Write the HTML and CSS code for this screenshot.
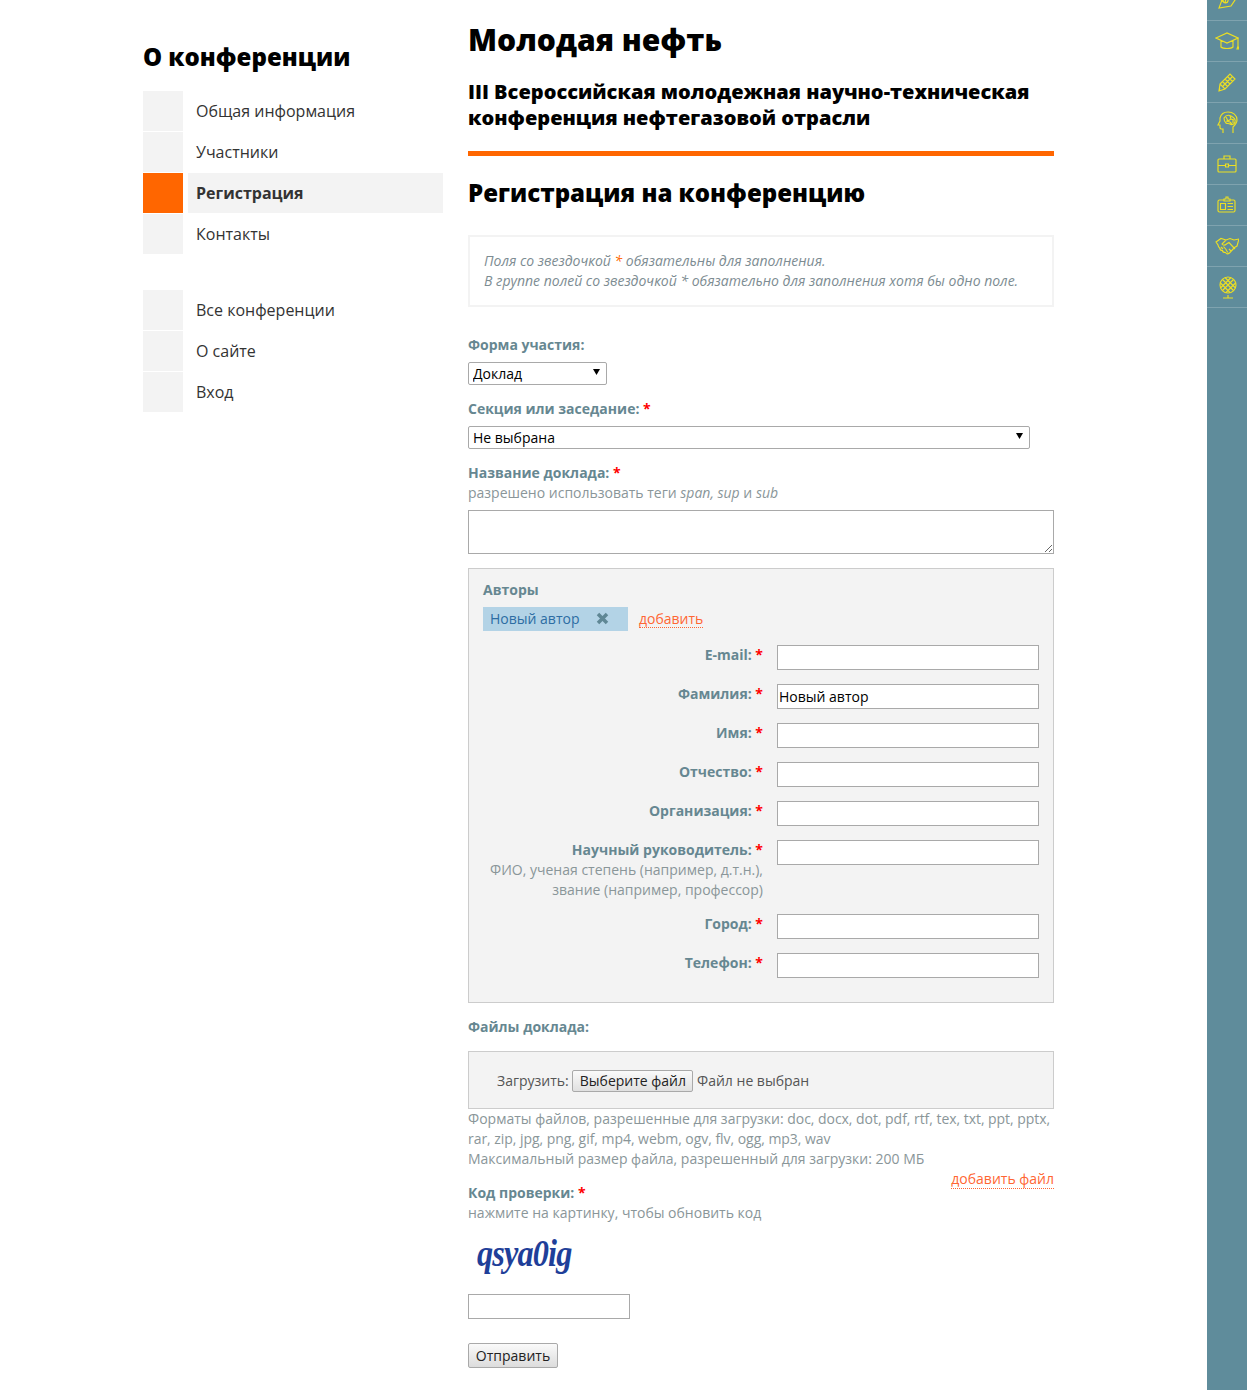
FILE: index.html
```html
<!DOCTYPE html>
<html lang="ru">
<head>
<meta charset="utf-8">
<title>Молодая нефть</title>
<link rel="stylesheet" href="styles.css">
</head>
<body>
<div class="page">
  <aside class="side">
    <h2 class="side-title">О конференции</h2>
    <ul class="menu">
      <li class="menu-item"><span class="sq"></span><a class="menu-link">Общая информация</a></li>
      <li class="menu-item"><span class="sq"></span><a class="menu-link">Участники</a></li>
      <li class="menu-item active"><span class="sq"></span><a class="menu-link">Регистрация</a></li>
      <li class="menu-item"><span class="sq"></span><a class="menu-link">Контакты</a></li>
    </ul>
    <ul class="menu menu-second">
      <li class="menu-item"><span class="sq"></span><a class="menu-link">Все конференции</a></li>
      <li class="menu-item"><span class="sq"></span><a class="menu-link">О сайте</a></li>
      <li class="menu-item"><span class="sq"></span><a class="menu-link">Вход</a></li>
    </ul>
  </aside>
  <main class="main">
    <h1 class="title">Молодая нефть</h1>
    <p class="subtitle">III Всероссийская молодежная научно-техническая конференция нефтегазовой отрасли</p>
    <div class="rule"></div>
    <h2 class="heading">Регистрация на конференцию</h2>
    <div class="notice">Поля со звездочкой <span class="notice-star">*</span> обязательны для заполнения.<br>В группе полей со звездочкой * обязательно для заполнения хотя бы одно поле.</div>
    <form class="form">
      <label class="label lab-form">Форма участия:</label>
      <select class="sel sel-short"><option>Доклад</option></select>
      <label class="label lab-sec">Секция или заседание: <b class="req">*</b></label>
      <select class="sel sel-long"><option>Не выбрана</option></select>
      <label class="label lab-name">Название доклада: <b class="req">*</b></label>
      <div class="hint">разрешено использовать теги <i>span, sup</i> и <i>sub</i></div>
      <textarea class="area"></textarea>

      <section class="authors">
        <div class="label">Авторы</div>
        <div class="tabs"><span class="tab">Новый автор<svg class="tab-x" viewBox="0 0 13 13"><path d="M2 2l9 9M11 2l-9 9"/></svg></span><a class="dotted">добавить</a></div>
        <div class="row"><div class="cap"><b class="label">E-mail:</b> <b class="req">*</b></div><input class="inp"></div>
        <div class="row"><div class="cap"><b class="label">Фамилия:</b> <b class="req">*</b></div><input class="inp" value="Новый автор"></div>
        <div class="row"><div class="cap"><b class="label">Имя:</b> <b class="req">*</b></div><input class="inp"></div>
        <div class="row"><div class="cap"><b class="label">Отчество:</b> <b class="req">*</b></div><input class="inp"></div>
        <div class="row"><div class="cap"><b class="label">Организация:</b> <b class="req">*</b></div><input class="inp"></div>
        <div class="row"><div class="cap"><b class="label">Научный руководитель:</b> <b class="req">*</b><br><span class="hint">ФИО, ученая степень (например, д.т.н.), звание (например, профессор)</span></div><input class="inp"></div>
        <div class="row"><div class="cap"><b class="label">Город:</b> <b class="req">*</b></div><input class="inp"></div>
        <div class="row"><div class="cap"><b class="label">Телефон:</b> <b class="req">*</b></div><input class="inp"></div>
      </section>

      <div class="label lab-files">Файлы доклада:</div>
      <div class="upload">Загрузить: <button class="choose" type="button">Выберите файл</button> <span>Файл не выбран</span></div>
      <div class="hint">Форматы файлов, разрешенные для загрузки: <span class="latin">doc, docx, dot, pdf, rtf, tex, txt, ppt, pptx, rar, zip, jpg, png, gif, mp4, webm, ogv, flv, ogg, mp3, wav</span><br>Максимальный размер файла, разрешенный для загрузки: 200 МБ</div>
      <div class="addfile"><a class="dotted">добавить файл</a></div>
      <label class="label lab-code">Код проверки: <b class="req">*</b></label>
      <div class="hint">нажмите на картинку, чтобы обновить код</div>
      <div class="captcha"><span class="captcha-text">qsya0ig</span></div>
      <input class="inp inp-code">
      <button class="submit" type="button">Отправить</button>
    </form>
  </main>
  <nav class="rail">
    <a class="rail-item"><svg class="ic" viewBox="0 0 24 24"><path d="M6 4 7 12 4 20 16 18 20 12 21 0M6 12l4 3M10 15l3-14M13 13a2.500 2.500 0 1 1-3-3 2.500 2.500 0 0 1 3 3z"/></svg></a>
    <a class="rail-item"><svg class="ic" viewBox="0 0 24 24"><path d="M1 9 12 4l11 5-11 5zM6 11.500V18c2 2 10 2 12 0v-6.500M23 9v8M22 20l1-3 1 3z"/></svg></a>
    <a class="rail-item"><svg class="ic" viewBox="0 0 24 24"><path d="M5 14 15 4l5 5-10 10-6 2zM5 14l5 5M4 21l1-3M7.500 11.500l5 5M10 9l5 5M12.500 6.500l5 5M8 16 17 7"/></svg></a>
    <a class="rail-item"><svg class="ic" viewBox="0 0 24 24"><path d="M8 22v-4H6l-1-1v-3H3l2-4V7c1-4 4-6 8-6 5 0 9 3 9 8 0 3-2 5-4 7v6M9 7c2-3 5-3 7-2s5 3 4 6-4 3-5 2-3 0-4-1-2-3-2-5zM11 6l2 4 3-2M15 5l1 3 3 1M11 10l4 1 2 2M18 9v3"/></svg></a>
    <a class="rail-item"><svg class="ic" viewBox="0 0 24 24"><path d="M4 7h16a1 1 0 0 1 1 1v11a1 1 0 0 1-1 1H4a1 1 0 0 1-1-1V8a1 1 0 0 1 1-1zM9 7V4h6v3M3 13.500h7.500M13.500 13.500H21M10.500 12h3v3h-3z"/></svg></a>
    <a class="rail-item"><svg class="ic" viewBox="0 0 24 24"><path d="M9 7H4.500A1.500 1.500 0 0 0 3 8.500v9A1.500 1.500 0 0 0 4.500 19h14a1.500 1.500 0 0 0 1.500-1.500v-9A1.500 1.500 0 0 0 18.500 7H15M9 8V6h2V4h2v2h2v2zM5.500 10.500h5v6h-5zM12.500 10.500h5.500M12.500 13.500h5.500M12.500 16.500h5.500"/></svg></a>
    <a class="rail-item"><svg class="ic" viewBox="0 0 24 24"><path d="M1 8 6 4.500l5 1.500 4-1.500 4 1.500 5-1-2 7-2.500 1.500-5 5.500c-2 1.500-3 1-4-.5-2 0-3-1-3-2-2 0-2.500-1-2.500-2C3.500 13 3 12 3 11zM11 6l-4 4c1 1.500 3 1.500 4.500 0L14 8.500l6 6.500M6 13l2 2M8.500 12.500l3 3.500M11 16l2 2.500M14 15l2 2"/></svg></a>
    <a class="rail-item"><svg class="ic" viewBox="0 0 24 24"><circle cx="13" cy="10" r="8"/><path d="M7.500 4.500 18.500 15.500M5.500 8l9.500 9.500M10 2.500 20.500 13M18.500 4.500 7.500 15.500M20.500 8 11 17.500M16 2.500 5.500 13M13 20v3M8 23h10"/></svg></a>
  </nav>
</div>
</body>
</html>
```

FILE: styles.css
```css
* { box-sizing: border-box; }
html, body { margin: 0; padding: 0; height: 1390px; overflow: hidden; background: #fff; }
body { font-family: "Open Sans", sans-serif; font-size: 14px; line-height: 20px; color: #333; }
ul { list-style: none; margin: 0; padding: 0; }
.page { display: flex; align-items: flex-start; height: 1390px; padding-left: 143px; }

.side { width: 300px; margin-right: 25px; padding-top: 41px; }
.side-title { margin: 0 0 19px; font-size: 24px; line-height: 31px; font-weight: 800; color: #000; }
.menu-second { margin-top: 36px; }
.menu-item { display: flex; gap: 5px; height: 40px; margin-bottom: 1px; }
.sq { width: 40px; background: #f3f3f3; flex: none; }
.menu-link { flex: 1; padding-left: 8px; font-size: 16px; line-height: 40px; color: #333; }
.active .sq { background: #ff6600; }
.active .menu-link { background: #f3f3f3; font-weight: 700; }

.main { width: 586px; flex: none; padding-top: 19px; }
.title { margin: 0; font-size: 30.05px; line-height: 41px; font-weight: 800; color: #000; }
.subtitle { margin: 19px 0 0; font-size: 20.03px; line-height: 26px; font-weight: 800; color: #000; }
.rule { height: 5px; margin-top: 20px; background: #ff6600; }
.heading { margin: 20px 0 0; font-size: 24.03px; line-height: 33px; font-weight: 800; color: #000; }
.notice { margin-top: 26px; padding: 14px 14px; height: 72px; border: 2px solid #f3f3f3; font-style: italic; color: #7d8c92; }
.notice-star { color: #ff6600; }

.form { display: block; }
.label { display: block; font-weight: 700; color: #668791; }
.cap .label { display: inline; }
.req { color: #f00; font-weight: 700; }
.hint { color: #8a9699; }
.latin { letter-spacing: -0.04px; }
.lab-form { margin-top: 28px; }
.lab-sec { margin-top: 14px; }
.lab-name { margin-top: 14px; }
.sel { display: block; margin-top: 7px; height: 23px; font-family: "Open Sans", sans-serif; font-size: 14px; color: #000; border: 1px solid #a9a9a9; border-radius: 2px; padding: 0 0 0 4px; appearance: none; -webkit-appearance: none; background: #fff url("data:image/svg+xml,%3Csvg xmlns='http://www.w3.org/2000/svg' width='7' height='6'%3E%3Cpath d='M0 0h7L3.500 6z'/%3E%3C/svg%3E") no-repeat right 6px top 6px; }
.sel-short { width: 139px; }
.sel-long { width: 562px; }
.area { display: block; width: 586px; height: 44px; margin-top: 7px; border: 1px solid #a9a9a9; background: #fff; }

.authors { margin-top: 14px; height: 435px; padding: 11px 14px 0; background: #f3f3f3; border: 1px solid #ccc; }
.tabs { display: flex; align-items: center; margin-top: 7px; height: 24px; margin-bottom: 14px; }
.tab { display: block; width: 145px; height: 24px; padding-left: 7px; line-height: 24px; background: #b3d3e6; color: #2d6da3; position: relative; }
.tab-x { position: absolute; left: 113px; top: 5px; width: 13px; height: 13px; fill: none; stroke: #5f8795; stroke-width: 3.500; }
.dotted { color: #ff6633; border-bottom: 1px dotted #ff6633; line-height: 17px; }
.tabs .dotted { margin-left: 11px; }
.row { display: flex; justify-content: space-between; margin-bottom: 14px; }
.cap { width: 280px; text-align: right; }
.inp { display: block; width: 262px; height: 25px; padding: 1px 1px; border: 1px solid #a9a9a9; background: #fff; font-family: "Open Sans", sans-serif; font-size: 14px; color: #000; }

.lab-files { margin-top: 14px; }
.upload { margin-top: 14px; height: 58px; padding: 18px 28px; background: #f3f3f3; border: 1px solid #ccc; color: #555; }
.choose { width: 121px; height: 22px; padding: 0; font-family: "Open Sans", sans-serif; font-size: 14px; line-height: 18px; color: #222; border: 1px solid #a9a9a9; border-radius: 2px; background: linear-gradient(#fafafa, #e0e0e0); }
.addfile { text-align: right; height: 18px; }
.lab-code { margin-top: -4px; }
.captcha { height: 58px; margin-top: 5px; padding-left: 9px; }
.captcha-text { display: inline-block; transform: scaleX(0.85); transform-origin: left center; font-family: "Liberation Serif", serif; font-size: 38px; line-height: 50px; font-weight: 700; font-style: italic; color: #1f3f99; letter-spacing: -1px; }
.inp-code { width: 162px; margin-top: 8px; }
.submit { display: block; margin-top: 24px; width: 90px; height: 25px; padding: 0; font-family: "Open Sans", sans-serif; font-size: 14px; color: #222; border: 1px solid #a9a9a9; border-radius: 2px; background: linear-gradient(#fafafa, #dcdcdc); }

.rail { position: absolute; top: 0; right: 0; width: 40px; height: 1390px; background: #5f8c9b; overflow: hidden; }
.rail-item { display: flex; align-items: center; justify-content: center; height: 41px; border-bottom: 1px solid #7fa3af; margin-top: -20px; }
.rail-item + .rail-item { margin-top: 0; }
.ic { width: 24px; height: 24px; fill: none; stroke: #ecdf22; stroke-width: 1.150; }
```
